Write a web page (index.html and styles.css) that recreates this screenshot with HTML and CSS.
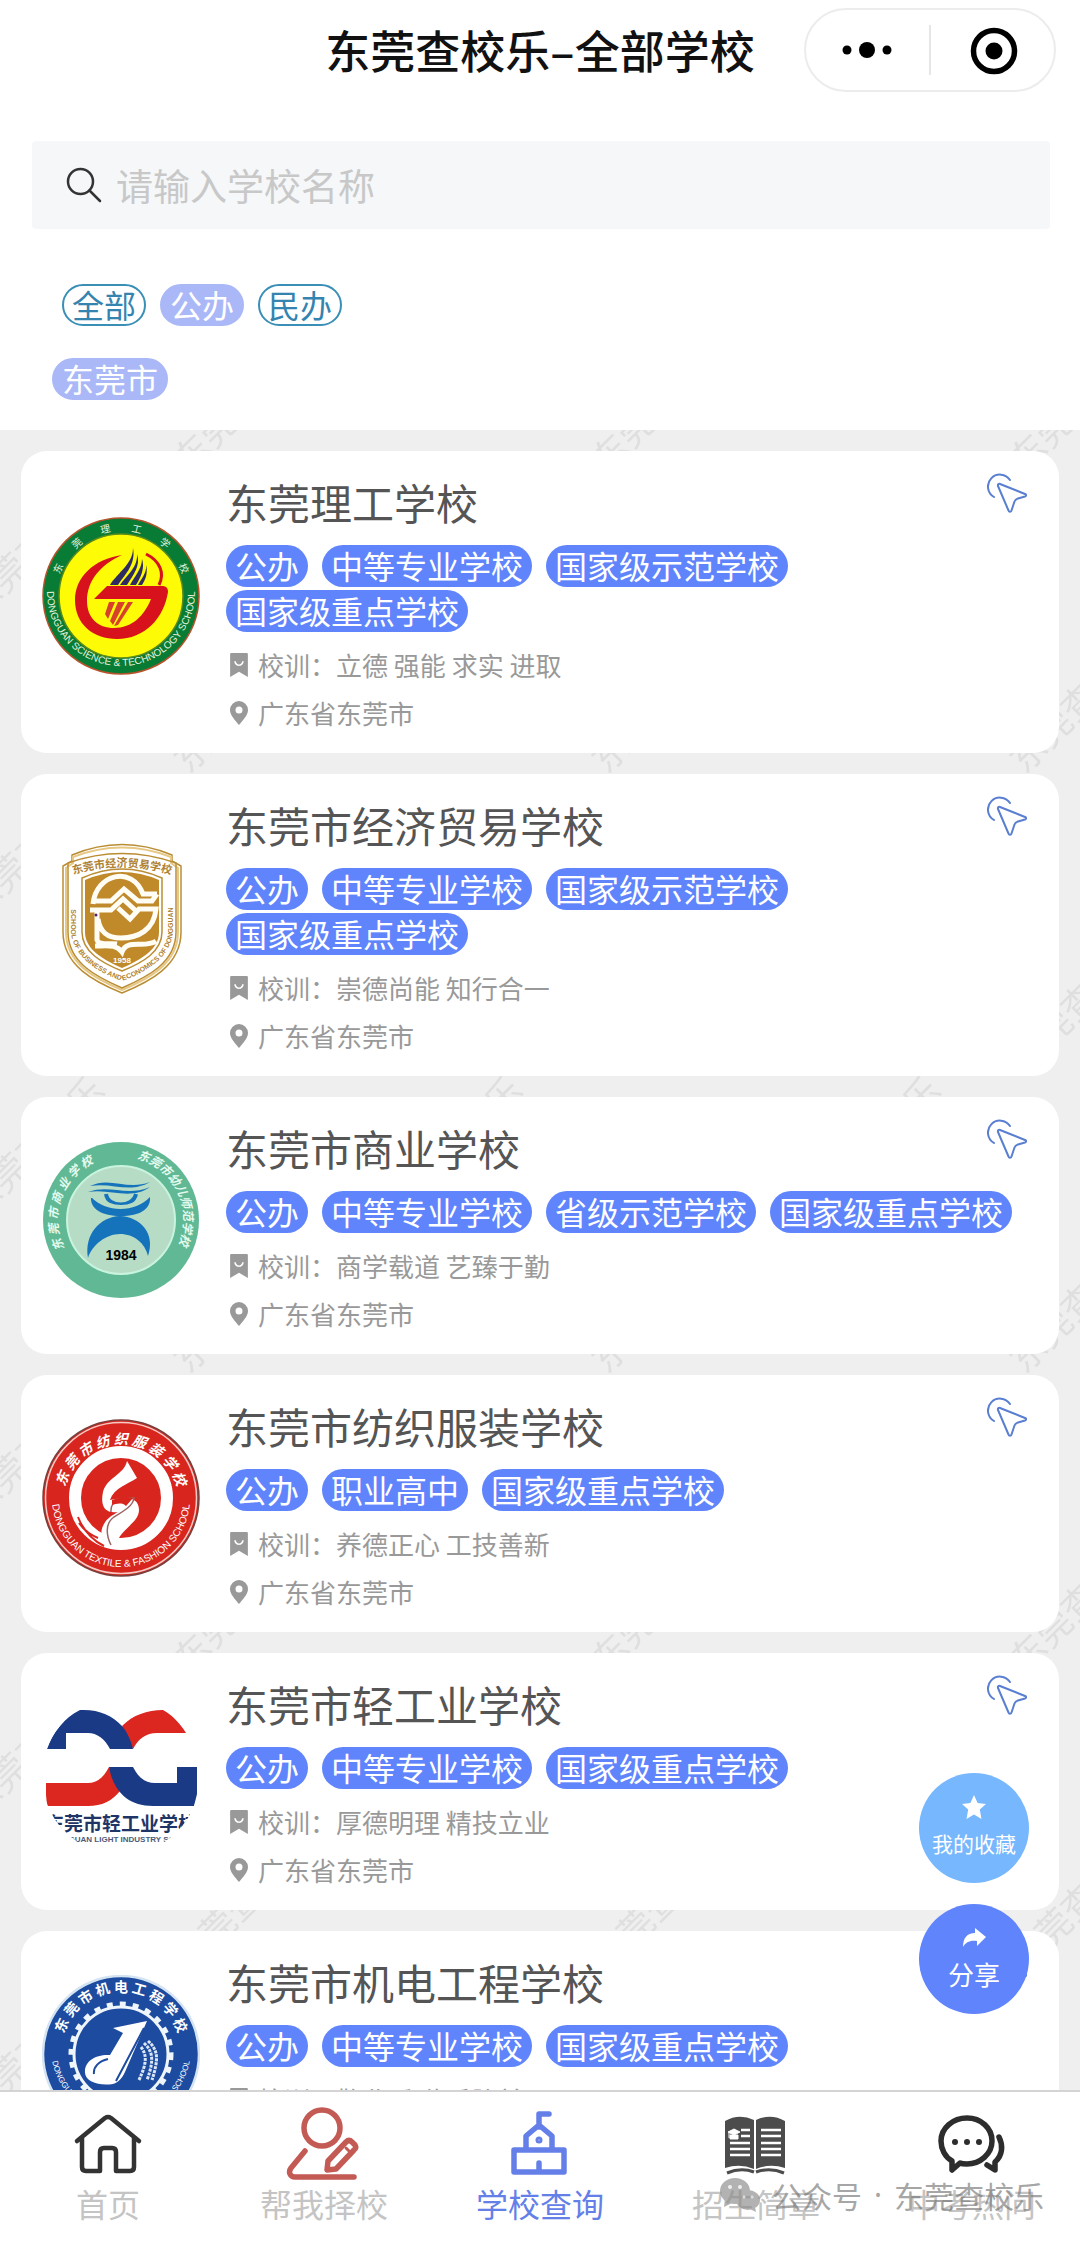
FILE: index.html
```html
<!DOCTYPE html>
<html lang="zh-CN">
<head>
<meta charset="utf-8">
<meta name="viewport" content="width=device-width, initial-scale=1">
<title>东莞查校乐–全部学校</title>
<link rel="stylesheet" href="styles.css">
</head>
<body>
<svg class="sprite" aria-hidden="true">
  <symbol id="i-motto" viewBox="0 0 17 23"><path fill="currentColor" fill-rule="evenodd" d="M1 0h15a1 1 0 0 1 1 1v22l-8.500-5L0 23V1a1 1 0 0 1 1-1zM4 8c0 6 9 6 9 0h-1.500c0 4-6 4-6 0z"/></symbol>
  <symbol id="i-pin" viewBox="0 0 18 24"><path fill="currentColor" fill-rule="evenodd" d="M9 0a9 9 0 0 1 9 9c0 5-5 10-9 15C5 19 0 14 0 9a9 9 0 0 1 9-9zm0 5.500a3.500 3.500 0 1 0 0 7 3.500 3.500 0 0 0 0-7z"/></symbol>
  <symbol id="i-click" viewBox="0 0 40 40"><g fill="none" stroke="#5a7fd0" stroke-width="2" stroke-linecap="round" stroke-linejoin="round"><path d="M7 24A12 12 0 1 1 23 7"/><path d="M11 13c-.5-1.500.5-2.500 2-2l25 10c1.500.6 1.500 2 0 2.500l-7 2c-2 .6-3 1.500-3.500 3l-3 9c-.5 1.800-2.500 1.800-3 0z"/></g></symbol>
</svg>

<div class="app">
  <header class="topbar">
    <h1 class="topbar-title">东莞查校乐–全部学校</h1>
    <div class="capsule">
      <button class="capsule-btn" type="button" aria-label="更多">
        <svg width="48" height="48" viewBox="0 0 48 48"><circle cx="3" cy="24" r="4.500"/><circle cx="23" cy="24" r="8"/><circle cx="43" cy="24" r="4.500"/></svg>
      </button>
      <button class="capsule-btn capsule-close" type="button" aria-label="关闭">
        <svg width="48" height="48" viewBox="0 0 48 48"><circle cx="25" cy="25" r="20.500" fill="none" stroke="#000" stroke-width="5.500"/><circle cx="25" cy="25" r="8.500"/></svg>
      </button>
    </div>
  </header>

  <section class="filters">
    <label class="search">
      <svg width="36" height="36" viewBox="0 0 36 36" fill="none" stroke="#333" stroke-width="2.500" stroke-linecap="round" aria-hidden="true"><circle cx="14.500" cy="14.500" r="12.500"/><path d="M23.500 23.500L34 34"/></svg>
      <input class="search-input" type="text" placeholder="请输入学校名称" aria-label="请输入学校名称">
    </label>
    <div class="chips chips-type">
      <button class="chip" type="button">全部</button>
      <button class="chip chip-on" type="button">公办</button>
      <button class="chip" type="button">民办</button>
    </div>
    <div class="chips">
      <button class="chip chip-on" type="button">东莞市</button>
    </div>
  </section>

  <main class="content">
    <svg class="watermark" aria-hidden="true">
      <defs>
        <pattern id="wm" x="24" width="418" height="300" patternUnits="userSpaceOnUse">
          <g font-size="36" fill="#dfdfdf">
            <text transform="translate(-44 190) rotate(-45)">东莞查校乐</text>
            <text transform="translate(374 190) rotate(-45)">东莞查校乐</text>
            <text transform="translate(165 345) rotate(-45)">东莞查校乐</text>
            <text transform="translate(165 45) rotate(-45)">东莞查校乐</text>
          </g>
        </pattern>
      </defs>
      <rect width="100%" height="100%" fill="url(#wm)"/>
    </svg>

    <ul class="list">
      <li class="card">
        <svg class="logo" viewBox="0 0 158 158" role="img" aria-label="东莞理工学校校徽">
          <defs><path id="a1" d="M14 79a65 65 0 0 1 130 0"/><path id="a2" d="M5 75a74 74 0 0 0 148 0"/></defs>
          <circle cx="79" cy="79" r="78" fill="#087b34" stroke="#b5532c" stroke-width="1.500"/>
          <circle cx="79" cy="79" r="62" fill="#fdfb05" stroke="#5c8a1c" stroke-width="1.500"/>
          <path fill="#d8121c" d="M80 38C52 42 33 60 33 83c0 24 18 39 42 39 28 0 47-21 51-47 0-4-2-6-6-6H65L52 82h57c-7 17-19 29-37 29-16 0-27-10-27-27 0-20 13-36 35-46z"/>
          <path d="M104 37c14 7 19 19 13 31" fill="none" stroke="#d8121c" stroke-width="3"/>
          <path fill="#2e2a62" d="M91 31c0 16-15 24-23 37h8c8-12 18-21 15-37zm4 6c1 13-10 21-17 31h7c6-10 14-19 10-31zm5 5c0 10-8 18-12 26h6c5-8 9-17 6-26zm4 6c1 8-5 14-8 20h4c4-6 6-13 4-20z"/>
          <path fill="#d8402c" d="M67 85l-4 12 3 5 7-17zm9 0l-8 19 3 4 12-23zm10 0L72 109l4-1 15-23z"/>
          <g fill="#e6f3dc"><text font-size="10"><textPath href="#a1" startOffset="50%" text-anchor="middle">东　　莞　　理　　工　　学　　校</textPath></text>
          <text font-size="10" class="latin"><textPath href="#a2" startOffset="50%" text-anchor="middle">DONGGUAN SCIENCE &amp; TECHNOLOGY SCHOOL</textPath></text></g>
        </svg>
        <div class="info">
          <div class="info-head"><h2 class="name">东莞理工学校</h2><button class="open" type="button" aria-label="查看详情"><svg width="40" height="40"><use href="#i-click"/></svg></button></div>
          <div class="tags"><span class="tag">公办</span><span class="tag">中等专业学校</span><span class="tag">国家级示范学校</span><span class="tag">国家级重点学校</span></div>
          <p class="meta"><svg width="18" height="24"><use href="#i-motto"/></svg>校训：立德 强能 求实 进取</p>
          <p class="meta"><svg width="18" height="24"><use href="#i-pin"/></svg>广东省东莞市</p>
        </div>
      </li>

      <li class="card">
        <svg class="logo" viewBox="0 0 158 158" role="img" aria-label="东莞市经济贸易学校校徽">
          <defs><path id="b1" d="M26 36Q80 18 134 36"/><path id="b2" d="M29 50V92C31 116 54 132 80 141 106 132 129 116 131 92V48"/></defs>
          <g fill="none" stroke="#ba8d35" stroke-width="1.500">
            <path fill="#fff" d="M30 15Q80-6 130 15v6l9 5v66c0 34-32 50-59 61-27-11-59-27-59-61V26l9-5z"/>
            <path d="M31 17Q80-2 129 17v6l7 5v64c0 32-30 47-56 58-26-11-56-26-56-58V28l7-5z" stroke="#e6c884" stroke-width="2"/>
            <path d="M26 23Q80 4 134 23v69c0 31-29 45-54 56-25-11-54-25-54-56z"/>
            <path d="M40 38Q80 20 120 38v54c0 20-20 31-40 39-20-8-40-19-40-39z"/>
          </g>
          <path fill="#c08a2a" d="M43 40Q80 24 117 40v52c0 18-19 28-37 36-18-8-37-18-37-36z"/>
          <path d="M51 64C54 34 90 25 101 54h14M48 70h21l12-11 12 11M115 54l-5 7H96L82 49 69 61H50M76 68l12 11 9-10h17C112 90 96 98 79 98 65 98 58 92 56 79M55 72v28c2 6 12 3 20 4M114 101c-11 8-29-3-34 11-6-8-14-6-27-6" fill="none" stroke="#fffdf4" stroke-width="5"/>
          <circle cx="54" cy="75" r="1.500" fill="#527"/>
          <g fill="#ae8232"><text font-size="11" font-weight="700"><textPath href="#b1" startOffset="50%" text-anchor="middle">东莞市经济贸易学校</textPath></text>
          <text font-size="7" font-weight="700" class="latin"><textPath href="#b2" startOffset="50%" text-anchor="middle">SCHOOL OF BUSINESS AND ECONOMICS OF DONGGUAN</textPath></text></g>
          <text x="80" y="123" font-size="8" font-weight="700" fill="#fff" text-anchor="middle" class="latin">1958</text>
        </svg>
        <div class="info">
          <div class="info-head"><h2 class="name">东莞市经济贸易学校</h2><button class="open" type="button" aria-label="查看详情"><svg width="40" height="40"><use href="#i-click"/></svg></button></div>
          <div class="tags"><span class="tag">公办</span><span class="tag">中等专业学校</span><span class="tag">国家级示范学校</span><span class="tag">国家级重点学校</span></div>
          <p class="meta"><svg width="18" height="24"><use href="#i-motto"/></svg>校训：崇德尚能 知行合一</p>
          <p class="meta"><svg width="18" height="24"><use href="#i-pin"/></svg>广东省东莞市</p>
        </div>
      </li>

      <li class="card">
        <svg class="logo" viewBox="0 0 158 158" role="img" aria-label="东莞市商业学校校徽">
          <defs><path id="c1" d="M24 110A63 63 0 0 1 79 16"/><path id="c2" d="M92 17A63 63 0 0 1 128 118"/></defs>
          <circle cx="79" cy="79" r="78" fill="#60b994"/>
          <circle cx="79" cy="79" r="54" fill="#b6dcc5" stroke="#c9f3de" stroke-width="2"/>
          <g fill="#1573bc">
            <path d="M48 45c20-10 37 5 60-4-20 12-38 0-60 4zM46 51c22-8 38 5 62-5-20 14-40 1-62 5z"/>
            <path d="M49 56c15 16 44 16 59 0 1 12-10 19-29 19S48 68 49 56z"/>
            <path d="M46 117C42 93 58 76 78 75c20 1 36 17 28 40-3-13-14-22-28-22s-28 11-32 24z"/>
          </g>
          <path d="M64 53c2 14 27 14 30 0" fill="#b6dcc5" stroke="#1573bc" stroke-width="4"/>
          <path d="M49 56h11c4 12 34 12 38 0h9" fill="none" stroke="#b6dcc5" stroke-width="2"/>
          <text x="79" y="119" font-size="14" font-weight="700" text-anchor="middle" class="latin">1984</text>
          <g fill="#e5fbef" font-style="italic" font-weight="700" font-size="12"><text><textPath href="#c1" startOffset="3">东 莞 市 商 业 学 校</textPath></text><text><textPath href="#c2" startOffset="3">东莞市幼儿师范学校</textPath></text></g>
        </svg>
        <div class="info">
          <div class="info-head"><h2 class="name">东莞市商业学校</h2><button class="open" type="button" aria-label="查看详情"><svg width="40" height="40"><use href="#i-click"/></svg></button></div>
          <div class="tags"><span class="tag">公办</span><span class="tag">中等专业学校</span><span class="tag">省级示范学校</span><span class="tag">国家级重点学校</span></div>
          <p class="meta"><svg width="18" height="24"><use href="#i-motto"/></svg>校训：商学载道 艺臻于勤</p>
          <p class="meta"><svg width="18" height="24"><use href="#i-pin"/></svg>广东省东莞市</p>
        </div>
      </li>

      <li class="card">
        <svg class="logo" viewBox="0 0 158 158" role="img" aria-label="东莞市纺织服装学校校徽">
          <defs><path id="d1" d="M23 68A58 58 0 0 1 135 68"/><path id="d2" d="M10 79a69 69 0 0 0 138 0"/></defs>
          <circle cx="79" cy="79" r="78" fill="#d8261f" stroke="#77403c" stroke-width="1.500"/>
          <circle cx="79" cy="79" r="75.500" fill="none" stroke="#f4c9c3" stroke-width="1.500"/>
          <circle cx="79" cy="79" r="46" fill="none" stroke="#fff" stroke-width="12"/>
          <path d="M36 98q8 20 26 29M37 104q7 10 19 15" fill="none" stroke="#d8261f" stroke-width="2"/>
          <path fill="#fff" d="M85 42l10 17C86 65 72 69 68 81c15-3 29-4 29 10 0 13-18 18-24 36-12-3-17-12-11-22 4-7 9-9 14-12-13 2-18-6-15-20 4-15 21-17 24-31z"/>
          <path d="M69 93c-1-12 9-13 23-14-1 8-10 13-20 19-10 7-7 20-3 28" fill="none" stroke="#9a6663" stroke-width="1.500"/>
          <path d="M70 81c7-3 14-3 21-2l-7 8c-4-4-10-2-14-1z" fill="#d8261f"/>
          <g fill="#fff"><text font-size="14" font-weight="700" font-style="italic"><textPath href="#d1" startOffset="50%" text-anchor="middle">东 莞 市 纺 织 服 装 学 校</textPath></text>
          <text font-size="10" class="latin"><textPath href="#d2" startOffset="50%" text-anchor="middle">DONGGUAN TEXTILE &amp; FASHION SCHOOL</textPath></text></g>
        </svg>
        <div class="info">
          <div class="info-head"><h2 class="name">东莞市纺织服装学校</h2><button class="open" type="button" aria-label="查看详情"><svg width="40" height="40"><use href="#i-click"/></svg></button></div>
          <div class="tags"><span class="tag">公办</span><span class="tag">职业高中</span><span class="tag">国家级重点学校</span></div>
          <p class="meta"><svg width="18" height="24"><use href="#i-motto"/></svg>校训：养德正心 工技善新</p>
          <p class="meta"><svg width="18" height="24"><use href="#i-pin"/></svg>广东省东莞市</p>
        </div>
      </li>

      <li class="card">
        <svg class="logo" viewBox="0 0 158 158" role="img" aria-label="东莞市轻工业学校校徽">
          <defs><clipPath id="e0"><circle cx="79" cy="79" r="79"/></clipPath></defs>
          <g clip-path="url(#e0)">
            <path fill="#dc2720" d="M80 29C91 18 105 13 121 13c9 5 17 13 23 23h-29c-11 0-19 6-24 16zM67 70c-5 10-12 16-21 16H4v12l1 11h41c14 0 24-5 32-15z"/>
            <path fill="#1b3a85" d="M5 52C11 35 22 21 38 13c18-1 32 5 42 16 5 6 9 14 11 23H68C63 42 55 36 46 36H24v16zM67 70h24c5 10 12 16 22 16h22V70h20v27l-3 12h-41c-27 0-40-17-44-39z"/>
            <text x="79" y="134" font-size="19" font-weight="700" fill="#1f3566" text-anchor="middle">东莞市轻工业学校</text>
            <text x="79" y="145" font-size="8" font-weight="700" fill="#4d5a78" text-anchor="middle" class="latin">DONGGUAN LIGHT INDUSTRY SCHOOL</text>
          </g>
        </svg>
        <div class="info">
          <div class="info-head"><h2 class="name">东莞市轻工业学校</h2><button class="open" type="button" aria-label="查看详情"><svg width="40" height="40"><use href="#i-click"/></svg></button></div>
          <div class="tags"><span class="tag">公办</span><span class="tag">中等专业学校</span><span class="tag">国家级重点学校</span></div>
          <p class="meta"><svg width="18" height="24"><use href="#i-motto"/></svg>校训：厚德明理 精技立业</p>
          <p class="meta"><svg width="18" height="24"><use href="#i-pin"/></svg>广东省东莞市</p>
        </div>
      </li>

      <li class="card">
        <svg class="logo" viewBox="0 0 158 158" role="img" aria-label="东莞市机电工程学校校徽">
          <defs><path id="f1" d="M20 66A60 60 0 0 1 138 66"/><path id="f2" d="M9 73a70 70 0 0 0 140 0"/></defs>
          <circle cx="79" cy="79" r="78" fill="#1d4b9f" stroke="#d5e4f3" stroke-width="2.500"/>
          <circle cx="79" cy="79" r="50" fill="none" stroke="#eef5fb" stroke-width="5" stroke-dasharray="6 7"/>
          <circle cx="79" cy="79" r="47" fill="none" stroke="#eef5fb" stroke-width="3"/>
          <path fill="#fff" d="M105 46L71 53l10 5-13 22C54 79 42 86 43 98c1 9 14 13 28 11 6-2 9-6 12-12z"/>
          <path d="M66 84c-9 2-15 8-14 15M102 53L74 106" fill="none" stroke="#1d4b9f" stroke-width="2"/>
          <path d="M102 68c8 8 11 15 3 37M106 66c10 9 11 17 4 39M99 72c6 8 6 16-2 33" fill="none" stroke="#dbe7f4" stroke-width="3" stroke-dasharray="3 1"/>
          <g fill="#fff"><text font-size="14" font-weight="700"><textPath href="#f1" startOffset="50%" text-anchor="middle">东 莞 市 机 电 工 程 学 校</textPath></text>
          <text font-size="8" class="latin"><textPath href="#f2" startOffset="50%" text-anchor="middle">DONGGUAN ELECTRICAL ENGINEERING SCHOOL</textPath></text></g>
        </svg>
        <div class="info">
          <div class="info-head"><h2 class="name">东莞市机电工程学校</h2><button class="open" type="button" aria-label="查看详情"><svg width="40" height="40"><use href="#i-click"/></svg></button></div>
          <div class="tags"><span class="tag">公办</span><span class="tag">中等专业学校</span><span class="tag">国家级重点学校</span></div>
          <p class="meta"><svg width="18" height="24"><use href="#i-motto"/></svg>校训：敬业乐群 手脑并用</p>
          <p class="meta"><svg width="18" height="24"><use href="#i-pin"/></svg>广东省东莞市</p>
        </div>
      </li>
    </ul>

    <div class="floats">
      <button class="float float-fav" type="button">
        <svg width="26" height="26" viewBox="0 0 26 26" fill="#fff"><path d="M13 1l3.600 8 8.400.9-6.200 5.700L20.500 25 13 20.500 5.500 25l1.700-9.400L1 9.900 9.400 9z"/></svg>
        我的收藏
      </button>
      <button class="float float-share" type="button">
        <svg width="26" height="26" viewBox="0 0 26 26" fill="#fff"><path d="M14 3l11 9-9 9v-5C9 15 5 17 2 22c0-9 4-14 12-14z"/></svg>
        分享
      </button>
    </div>
  </main>

  <nav class="tabbar">
    <a class="tab" href="#home">
      <svg width="76" height="76" viewBox="0 0 76 76" fill="none" stroke="#333" stroke-width="4.500" stroke-linecap="round" stroke-linejoin="round"><path d="M7 36L35 13q3-2 6 0l28 23M12 33v29q0 4 4 4h14V47q0-4 4-4h8q4 0 4 4v19h14q4 0 4-4V33"/></svg>
      首页
    </a>
    <a class="tab" href="#choose">
      <svg width="76" height="76" viewBox="0 0 76 76" fill="none" stroke="#c45a54" stroke-width="5.500" stroke-linecap="round" stroke-linejoin="round"><circle cx="36" cy="23" r="18"/><path d="M19 46L5 63c-3 4-1 9 4 9h59M42 56l18-19q3-3 6 0l3 3q2 3-1 5L50 64l-9 1z"/><path d="M60 43l5 5" stroke-width="3"/></svg>
      帮我择校
    </a>
    <a class="tab tab-on" href="#query">
      <svg width="76" height="76" viewBox="0 0 76 76" fill="none" stroke="#6480e8" stroke-width="5.500" stroke-linecap="round" stroke-linejoin="round"><path d="M37 22V9h10M24 43V31l13-11 13 11v12M12 45h50v22H12zM37 66v-8"/><circle cx="37" cy="35" r="1.500" stroke-width="4"/></svg>
      学校查询
    </a>
    <a class="tab" href="#guide">
      <svg width="76" height="76" viewBox="0 0 76 76"><path fill="#4c4c4c" d="M7 16q14-8 29-1v49q-14-6-29-1zM38 15q15-7 29 1v47q-15-5-29 1z"/><path d="M9 68q14-6 27-1M38 67q14-5 28 1" fill="none" stroke="#4c4c4c" stroke-width="3"/><path d="M23 25h9M23 31h9M12 38h20M12 44h20M12 50h20M43 25h20M43 31h20M43 38h20M43 44h20M43 50h20" stroke="#fff" stroke-width="2.500"/><path d="M10 27l6-3 6 3-6 3zM12 30h8v4h-8zM11 27v6" fill="#fff" stroke="#fff"/></svg>
      招生简章
    </a>
    <a class="tab" href="#hot">
      <svg width="76" height="76" viewBox="0 0 76 76" fill="none" stroke="#2d2d2d" stroke-width="5.500" stroke-linecap="round" stroke-linejoin="round"><path d="M33 13c14 0 25 10 25 23S46 59 33 59c-3 0-5 0-7-1l-8 7v-9C11 52 7 44 7 36c0-13 12-23 26-23z"/><path d="M65 32c4 8 4 18-4 25v8l-8-5"/><g fill="#2d2d2d" stroke="none"><circle cx="21" cy="37" r="3"/><circle cx="33" cy="37" r="3"/><circle cx="45" cy="37" r="3"/></g></svg>
      中考热问
    </a>
    <div class="account">
      <svg width="40" height="34" viewBox="0 0 40 34"><g fill="#8a8a8a"><ellipse cx="15" cy="13" rx="15" ry="13"/><path d="M5 20l-1 9 8-4zM35 29l1 5-6-3z"/><ellipse cx="28" cy="22" rx="12" ry="10"/></g><g fill="#e8e8e8"><circle cx="10" cy="9" r="2"/><circle cx="20" cy="9" r="2"/><circle cx="24" cy="19" r="1.500"/><circle cx="32" cy="19" r="1.500"/></g></svg>
      <span>公众号</span><span class="dot">·</span><span>东莞查校乐</span>
    </div>
  </nav>
</div>
</body>
</html>
```
FILE: styles.css
```css
* {
  box-sizing: border-box;
}

body {
  margin: 0;
  background: #fff;
  color: #555;
  font-family: "Noto Sans CJK SC", "Noto Sans", sans-serif;
}

button {
  margin: 0;
  padding: 0;
  border: 0;
  background: none;
  color: inherit;
  font: inherit;
}

svg {
  display: block;
}

.sprite {
  position: absolute;
  width: 0;
  height: 0;
}

.app {
  display: flex;
  flex-direction: column;
  height: 100vh;
}

/* Title bar */
.topbar {
  display: grid;
  grid-template-columns: 1fr auto 1fr;
  align-items: center;
  padding: 8px 24px 0;
}

.topbar-title {
  grid-column: 2;
  margin: 0;
  color: #111;
  font-size: 45px;
  font-weight: 500;
  line-height: 84px;
}

.capsule {
  display: flex;
  justify-self: end;
  align-items: center;
  width: 252px;
  height: 84px;
  border: 2px solid #ececec;
  border-radius: 42px;
}

.capsule-btn {
  display: flex;
  flex: 1;
  align-items: center;
  justify-content: center;
  height: 50px;
}

.capsule-btn svg {
  overflow: visible;
}

.capsule-close {
  border-left: 2px solid #e6e6e6;
}

/* Search and filters */
.filters {
  padding: 49px 30px 30px 32px;
}

.search {
  display: flex;
  align-items: center;
  gap: 14px;
  height: 88px;
  padding: 0 34px;
  border-radius: 4px;
  background: #f5f7f9;
}

.search-input {
  flex: 1;
  min-width: 0;
  padding: 0;
  border: 0;
  outline: 0;
  background: none;
  color: #333;
  font: inherit;
  font-size: 37px;
  line-height: 56px;
}

.search-input::placeholder {
  color: #c8c8c8;
  opacity: 1;
}

.chips {
  display: flex;
  gap: 14px;
  margin-top: 32px;
  padding-left: 20px;
}

.chips-type {
  margin-top: 55px;
  padding-left: 30px;
}

.chip {
  height: 42px;
  padding: 0 8px 2px;
  border: 2px solid #3a8fb7;
  border-radius: 21px;
  color: #3584b0;
  font-size: 32px;
  line-height: 36px;
}

.chip-on {
  border-color: #aab8f7;
  background: #aab8f7;
  color: #fff;
}

/* School list */
.content {
  position: relative;
  flex: 1;
  min-height: 0;
  overflow: hidden;
  background: #efefef;
}

.watermark {
  position: absolute;
  inset: 0;
  width: 100%;
  height: 100%;
}

.list {
  position: relative;
  display: flex;
  flex-direction: column;
  gap: 21px;
  height: 100%;
  margin: 0;
  padding: 21px;
  overflow-y: auto;
  scrollbar-width: none;
  list-style: none;
}

.card {
  display: flex;
  flex-shrink: 0;
  align-items: center;
  gap: 26px;
  padding: 0 32px 0 21px;
  border-radius: 26px;
  background: #fff;
}

.logo {
  flex: none;
  width: 158px;
  height: 158px;
  margin-bottom: 12px;
}

.latin {
  font-family: "Liberation Sans", sans-serif;
}

.info {
  flex: 1;
  min-width: 0;
  padding: 22px 0 16px;
}

.info-head {
  display: flex;
  align-items: flex-start;
  justify-content: space-between;
}

.name {
  margin: 0 0 14px;
  color: #555;
  font-size: 42px;
  font-weight: 400;
  line-height: 58px;
}

.tags {
  display: flex;
  flex-wrap: wrap;
  gap: 3px 14px;
  margin-bottom: 9px;
}

.tag {
  padding: 0 9px 2px;
  border-radius: 21px;
  background: #5f84fb;
  color: #fff;
  font-size: 32px;
  line-height: 40px;
}

.meta {
  display: flex;
  align-items: center;
  gap: 10px;
  margin: 0 0 0 4px;
  color: #999;
  font-size: 26px;
  line-height: 48px;
}

/* Floating actions */
.floats {
  position: absolute;
  right: 51px;
  bottom: 76px;
  display: grid;
  gap: 21px;
}

.float {
  display: flex;
  flex-direction: column;
  align-items: center;
  justify-content: center;
  width: 110px;
  height: 110px;
  padding-top: 4px;
  border-radius: 50%;
  color: #fff;
  line-height: 46px;
}

.float-fav {
  background: #76b7fd;
  font-size: 21px;
}

.float-share {
  background: #5f84fb;
  font-size: 26px;
}

/* Bottom navigation */
.tabbar {
  position: relative;
  display: grid;
  grid-template-columns: repeat(5, 1fr);
  padding-bottom: 16px;
  border-top: 2px solid #d4d4d4;
  background: #fff;
}

.tab {
  display: flex;
  flex-direction: column;
  align-items: center;
  padding-top: 13px;
  color: #c4c4c4;
  font-size: 32px;
  line-height: 44px;
  text-decoration: none;
}

.tab-on {
  color: #6480e8;
}

.account {
  position: absolute;
  right: 36px;
  bottom: 24px;
  display: flex;
  align-items: center;
  gap: 12px;
  color: #777;
  font-size: 30px;
  line-height: 44px;
  opacity: 0.65;
}

.dot {
  font-family: "Noto Sans", sans-serif;
}
```
